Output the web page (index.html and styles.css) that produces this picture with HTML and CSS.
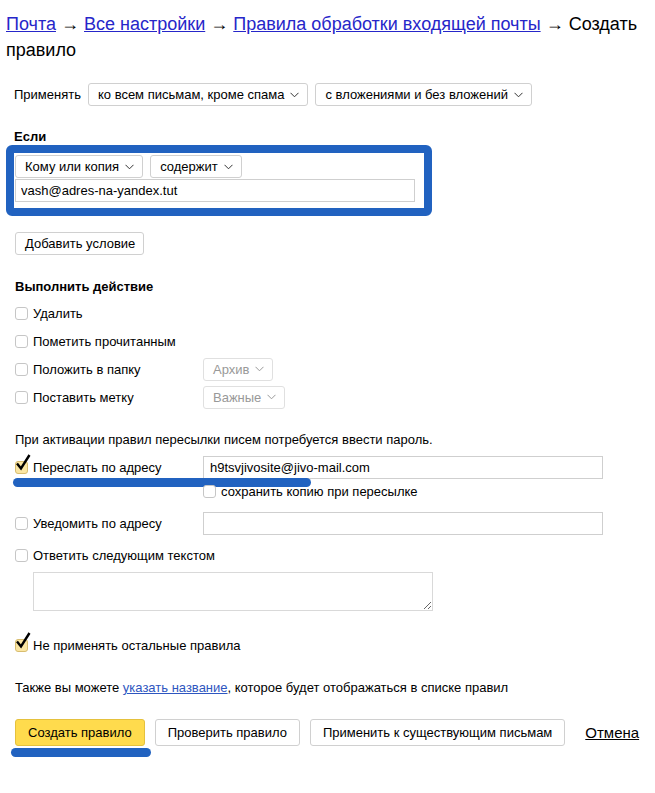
FILE: index.html
```html
<!DOCTYPE html>
<html>
  <head>
    <meta charset="utf-8">
    <title>Создать правило</title>
    <link rel="stylesheet" href="styles.css">
  </head>
  <body>
    <h1 class="crumbs">
      <a href="#">Почта</a> <span>→</span> <a href="#">Все настройки</a> <span>→</span> <a href="#">Правила обработки входящей почты</a> <span>→ Создать</span> <span>правило</span>
    </h1>

    <form class="rule">
      <div class="apply_row">
        <span class="apply_label">Применять</span>
        <span class="select">ко всем письмам, кроме спама <svg class="arrow" width="9" height="6" viewBox="0 0 9 6"><polyline points="0.5,0.8 4.5,4.8 8.5,0.8"/></svg></span>
        <span class="select">с вложениями и без вложений <svg class="arrow" width="9" height="6" viewBox="0 0 9 6"><polyline points="0.5,0.8 4.5,4.8 8.5,0.8"/></svg></span>
      </div>

      <h3 class="section_title if_title">Если</h3>
      <div class="highlight">
        <div class="cond_row">
          <span class="select">Кому или копия <svg class="arrow" width="9" height="6" viewBox="0 0 9 6"><polyline points="0.5,0.8 4.5,4.8 8.5,0.8"/></svg></span>
          <span class="select">содержит <svg class="arrow" width="9" height="6" viewBox="0 0 9 6"><polyline points="0.5,0.8 4.5,4.8 8.5,0.8"/></svg></span>
        </div>
        <input class="field cond_field" type="text" value="vash@adres-na-yandex.tut">
      </div>

      <button type="button" class="btn add_btn">Добавить условие</button>

      <h3 class="section_title action_title">Выполнить действие</h3>
      <div class="action">
        <label class="check"><span class="box"></span>Удалить</label>
      </div>
      <div class="action">
        <label class="check"><span class="box"></span>Пометить прочитанным</label>
      </div>
      <div class="action">
        <label class="check"><span class="box"></span>Положить в папку</label>
        <span class="select disabled">Архив <svg class="arrow" width="9" height="6" viewBox="0 0 9 6"><polyline points="0.5,0.8 4.5,4.8 8.5,0.8"/></svg></span>
      </div>
      <div class="action">
        <label class="check"><span class="box"></span>Поставить метку</label>
        <span class="select disabled">Важные <svg class="arrow" width="9" height="6" viewBox="0 0 9 6"><polyline points="0.5,0.8 4.5,4.8 8.5,0.8"/></svg></span>
      </div>

      <p class="note">При активации правил пересылки писем потребуется ввести пароль.</p>

      <div class="action forward_row">
        <label class="check"><span class="box checked"><svg class="tick" width="16" height="17" viewBox="0 0 16 17"><path d="M2 9.5 L6 14.5 L14.5 1"/></svg></span>Переслать по адресу</label>
        <input class="field wide_field" type="text" value="h9tsvjivosite@jivo-mail.com">
        <span class="forward_marker"></span>
      </div>
      <div class="keep_row">
        <label class="check"><span class="box"></span>сохранить копию при пересылке</label>
      </div>
      <div class="action notify_row">
        <label class="check"><span class="box"></span>Уведомить по адресу</label>
        <input class="field wide_field" type="text" value="">
      </div>
      <div class="action reply_row">
        <label class="check"><span class="box"></span>Ответить следующим текстом</label>
      </div>
      <textarea class="reply_text"></textarea>

      <div class="action stop_row">
        <label class="check"><span class="box checked"><svg class="tick" width="16" height="17" viewBox="0 0 16 17"><path d="M2 9.5 L6 14.5 L14.5 1"/></svg></span>Не применять остальные правила</label>
      </div>

      <p class="note name_note">Также вы можете <a href="#">указать название</a>, которое будет отображаться в списке правил</p>

      <div class="buttons">
        <div class="primary_wrap">
          <button type="button" class="btn big primary">Создать правило</button>
          <div class="create_marker"></div>
        </div>
        <button type="button" class="btn big">Проверить правило</button>
        <button type="button" class="btn big">Применить к существующим письмам</button>
        <a href="#" class="cancel">Отмена</a>
      </div>
    </form>
  </body>
</html>
```

FILE: styles.css
```css
body {
  margin: 0;
  font-family: "Liberation Sans", Arial, sans-serif;
  font-size: 13px;
  color: #000;
  background: #fff;
}

.crumbs {
  margin: 0;
  padding: 11px 6px 0;
  font-size: 18px;
  font-weight: normal;
  line-height: 26px;
}
.crumbs a {
  color: #2626c9;
}

.rule {
  padding: 0 0 40px 15px;
}

/* selects and buttons */
.select,
.btn {
  display: inline-flex;
  align-items: center;
  box-sizing: border-box;
  height: 23px;
  padding: 0 8px 0 9px;
  border: 1px solid #d0d0d0;
  border-radius: 3px;
  background: #fff;
  font-family: inherit;
  font-size: 13px;
  color: #000;
  white-space: nowrap;
}
.select .arrow {
  margin-left: 6px;
  fill: none;
  stroke: #333;
  stroke-width: 1;
}
.select.disabled {
  color: #999;
  border-color: #e0e0e0;
}
.select.disabled .arrow {
  stroke: #999;
}

.apply_row {
  display: flex;
  align-items: center;
  gap: 7px;
  margin-top: 20px;
  margin-left: -1px;
}

.section_title {
  margin: 0;
  font-size: 13px;
  line-height: 16px;
  font-weight: bold;
}
.if_title {
  margin-top: 23px;
  margin-left: -1px;
}
.action_title {
  margin-top: 24px;
  margin-bottom: 4px;
}

/* the blue frame round the condition */
.highlight {
  width: 408px;
  margin-left: -9px;
  padding: 2px 1px 6px;
  border: 8px solid #2162c0;
  border-radius: 6px;
}
.cond_row {
  display: flex;
  gap: 7px;
}

.field {
  display: block;
  box-sizing: border-box;
  height: 23px;
  padding: 0 5px;
  border: 1px solid #cfcfcf;
  font-family: inherit;
  font-size: 13px;
  color: #000;
  outline: none;
}
.cond_field {
  width: 400px;
  margin-top: 1px;
}

.add_btn {
  margin-top: 16px;
}

/* checkbox rows */
.action {
  position: relative;
  display: flex;
  align-items: center;
  height: 28px;
}
.check {
  display: flex;
  align-items: center;
  gap: 5px;
  width: 188px;
  flex: none;
  white-space: nowrap;
}
.box {
  position: relative;
  box-sizing: border-box;
  width: 13px;
  height: 13px;
  flex: none;
  border: 1px solid #c6c6c6;
  border-radius: 3px;
  background: #fff;
}
.box.checked {
  background: #fbe6a3;
  border-color: #d8bd70;
}
.tick {
  position: absolute;
  left: -1px;
  top: -8px;
  fill: none;
  stroke: #000;
  stroke-width: 2.4;
  stroke-linejoin: miter;
}

.note {
  margin: 21px 0 0;
  line-height: 16px;
}
.note a {
  color: #2e56c0;
}

.forward_row {
  margin-top: 5px;
}
.wide_field {
  width: 400px;
  padding: 0 6px;
}
.keep_row {
  display: flex;
  align-items: center;
  height: 18px;
  margin-top: 1px;
  padding-left: 188px;
}
.notify_row {
  margin-top: 9px;
}
.reply_row {
  margin-top: 4px;
}
.reply_text {
  display: block;
  box-sizing: border-box;
  width: 400px;
  height: 39px;
  margin: 3px 0 0 18px;
  border: 1px solid #d9d9d9;
  font-family: inherit;
}
.stop_row {
  margin-top: 20px;
}
.name_note {
  margin-top: 21px;
}

/* blue hand-drawn marks */
.forward_marker {
  position: absolute;
  left: -2px;
  top: 25px;
  width: 298px;
  height: 9px;
  border-radius: 5px;
  background: #2162c0;
}
.primary_wrap {
  position: relative;
  display: flex;
}
.create_marker {
  position: absolute;
  left: -4px;
  top: 29px;
  width: 140px;
  height: 9px;
  border-radius: 5px;
  background: #2162c0;
}

.buttons {
  display: flex;
  align-items: center;
  gap: 10px;
  margin-top: 23px;
}
.btn.big {
  height: 27px;
  padding: 0 12px;
}
.btn.primary {
  background: #ffdb4d;
  border-color: #e5c13d;
}
.cancel {
  margin-left: 10px;
  font-size: 15px;
  color: #000;
}
```
